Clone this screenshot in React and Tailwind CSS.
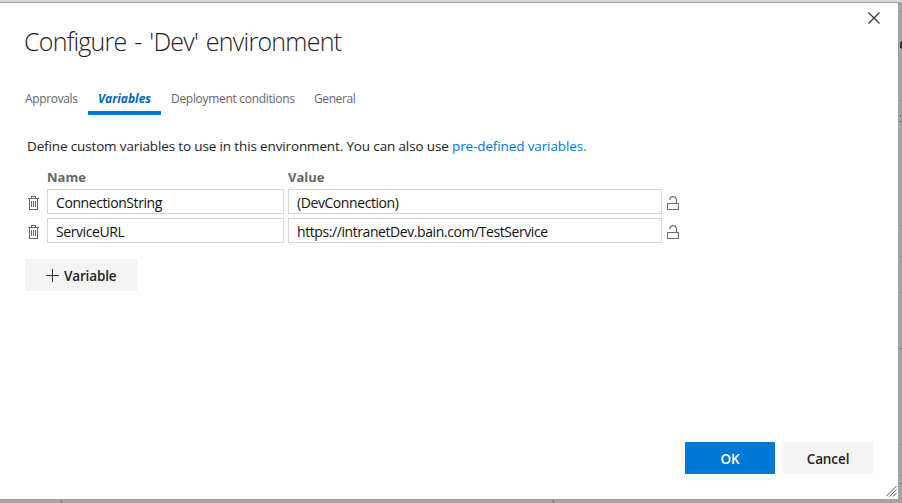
import React from "react";

const rows = [
  { name: "ConnectionString", value: "(DevConnection)" },
  { name: "ServiceURL", value: "https://intranetDev.bain.com/TestService" },
];

function Trash() {
  return (
    <svg width="11" height="14" viewBox="0 0 11 14" fill="none" stroke="#666" shapeRendering="crispEdges">
      <path d="M0 2.5H11M3.5 2V0.5H7.5V2M1.5 3V13.5H9.5V3M3.5 5V11M5.5 5V11M7.5 5V11" />
    </svg>
  );
}

function Unlock() {
  return (
    <svg width="12" height="15" viewBox="0 0 12 15" fill="none" stroke="#707070">
      <path d="M0.5 7.5H11.5V13.5H0.5Z" strokeWidth="1.2" />
      <path d="M9.5 7.5V4A3.3 3.3 0 0 0 2.8 4" strokeWidth="1.2" />
    </svg>
  );
}

function Field({ className, value }) {
  return (
    <div className={`flex h-[25px] items-center border border-[#d6d6d6] pl-2 pt-[2px] text-[14px] tracking-[-0.42px] text-[#111] ${className}`}>
      <span>{value}</span>
    </div>
  );
}

function Backdrop() {
  return (
    <svg className="absolute inset-0" width="902" height="503" shapeRendering="crispEdges">
      <rect width="902" height="2" fill="#d9d9d9" />
      <path d="M900 11.5H902M900 100.5H902M900 225.5H902M900 256.5H902M900 261.5H902M900 292.5H902M900 444.5H902M900 475.5H902" stroke="#929292" />
      <path d="M900 348.5H902M900 483.5H902" stroke="#777" />
      <path d="M901 41H902V49H901V48H900V42H901Z" fill="#333" />
      <path d="M900 115h1v1h-1zM900 121h1v1h-1z" fill="#333" />
      <path d="M60 500h1v1h1v2h-1v-2h-1zM552 500h1v1h1v2h-1v-2h-1z" fill="#777" />
    </svg>
  );
}

export default function App() {
  return (
    <div className="relative h-[503px] w-[902px] overflow-hidden bg-[#a5a5a5] pt-[2px] font-['Open_Sans','Noto_Sans',sans-serif] whitespace-nowrap">
      <Backdrop />
      <div className="relative flex h-[498px] w-[899px] flex-col border-t border-r border-b border-[#a0a0a0] bg-white pl-[24px]">
        <header className="flex h-[75px] shrink-0 items-start justify-between pr-[18px]">
          <h1 className="pt-[20px] text-[25px] leading-[36px] font-light tracking-[-0.75px] [word-spacing:2px] text-[#222]">Configure - 'Dev' environment</h1>
          <svg className="mt-[9px]" width="12" height="12" viewBox="0 0 12 12" stroke="#333" strokeWidth="1.2">
            <path d="M0.5 0.5L11.5 11.5M11.5 0.5L0.5 11.5" />
          </svg>
        </header>
        <nav className="flex h-[37px] shrink-0 text-[12px] leading-[42px] text-[#666]">
          <span className="w-[64px] pl-px tracking-[-0.35px]">Approvals</span>
          <span className="w-[73px] border-b-4 border-[#0078d7] pl-[10px] font-bold italic tracking-[0px] text-[#0067b8]">Variables</span>
          <span className="w-[153px] pl-[10px] tracking-[-0.3px]">Deployment conditions</span>
          <span className="tracking-[-0.4px]">General</span>
        </nav>
        <p className="h-[52px] shrink-0 pt-[21px] pl-[3px] text-[13.5px] leading-[20px] text-[#222]">
          <span className="tracking-[-0.14px]">Define custom variables to use in this environment. You can also use </span>
          <span className="tracking-[-0.12px] text-[#0078d7]">pre-defined variables.</span>
        </p>
        <div className="flex h-[22px] shrink-0 pl-[23px] text-[13px] leading-[20px] font-bold text-[#666]">
          <span className="w-[241px]">Name</span>
          <span>Value</span>
        </div>
        <div className="flex flex-col gap-1">
          {rows.map((row) => (
            <div key={row.name} className="flex h-[25px] items-center">
              <div className="w-[23px] pt-[2px] pl-[4px]"><Trash /></div>
              <Field className="w-[237px]" value={row.name} />
              <Field className="ml-1 w-[374px]" value={row.value} />
              <div className="ml-[5px] pt-[3px]"><Unlock /></div>
            </div>
          ))}
        </div>
        <button className="mt-4 ml-px flex h-8 w-[112px] shrink-0 items-center bg-[#f4f4f4] pl-[21px] text-[13.5px] font-semibold text-[#222]">
          <svg width="13" height="13" viewBox="0 0 13 13" stroke="#333" shapeRendering="crispEdges"><path d="M6.5 0V13M0 6.5H13" /></svg>
          <span className="ml-[5px] pt-[3px] tracking-[-0.15px]">Variable</span>
        </button>
        <footer className="mt-[151px] flex h-8 shrink-0 justify-end gap-2 pr-[25px] text-[13.5px] font-semibold">
          <button className="w-[90px] bg-[#0078d7] pt-[3px] text-white">OK</button>
          <button className="w-[90px] bg-[#f4f4f4] pt-[3px] tracking-[-0.1px] text-[#222]">Cancel</button>
        </footer>
        <svg className="mt-[12px] mr-px self-end" width="11" height="11" viewBox="0 0 11 11" stroke="#555" strokeWidth="1">
          <path d="M0 10.5L10.5 0M3.5 10.5L10.5 3.5M7 10.5L10.5 7" />
        </svg>
      </div>
    </div>
  );
}
